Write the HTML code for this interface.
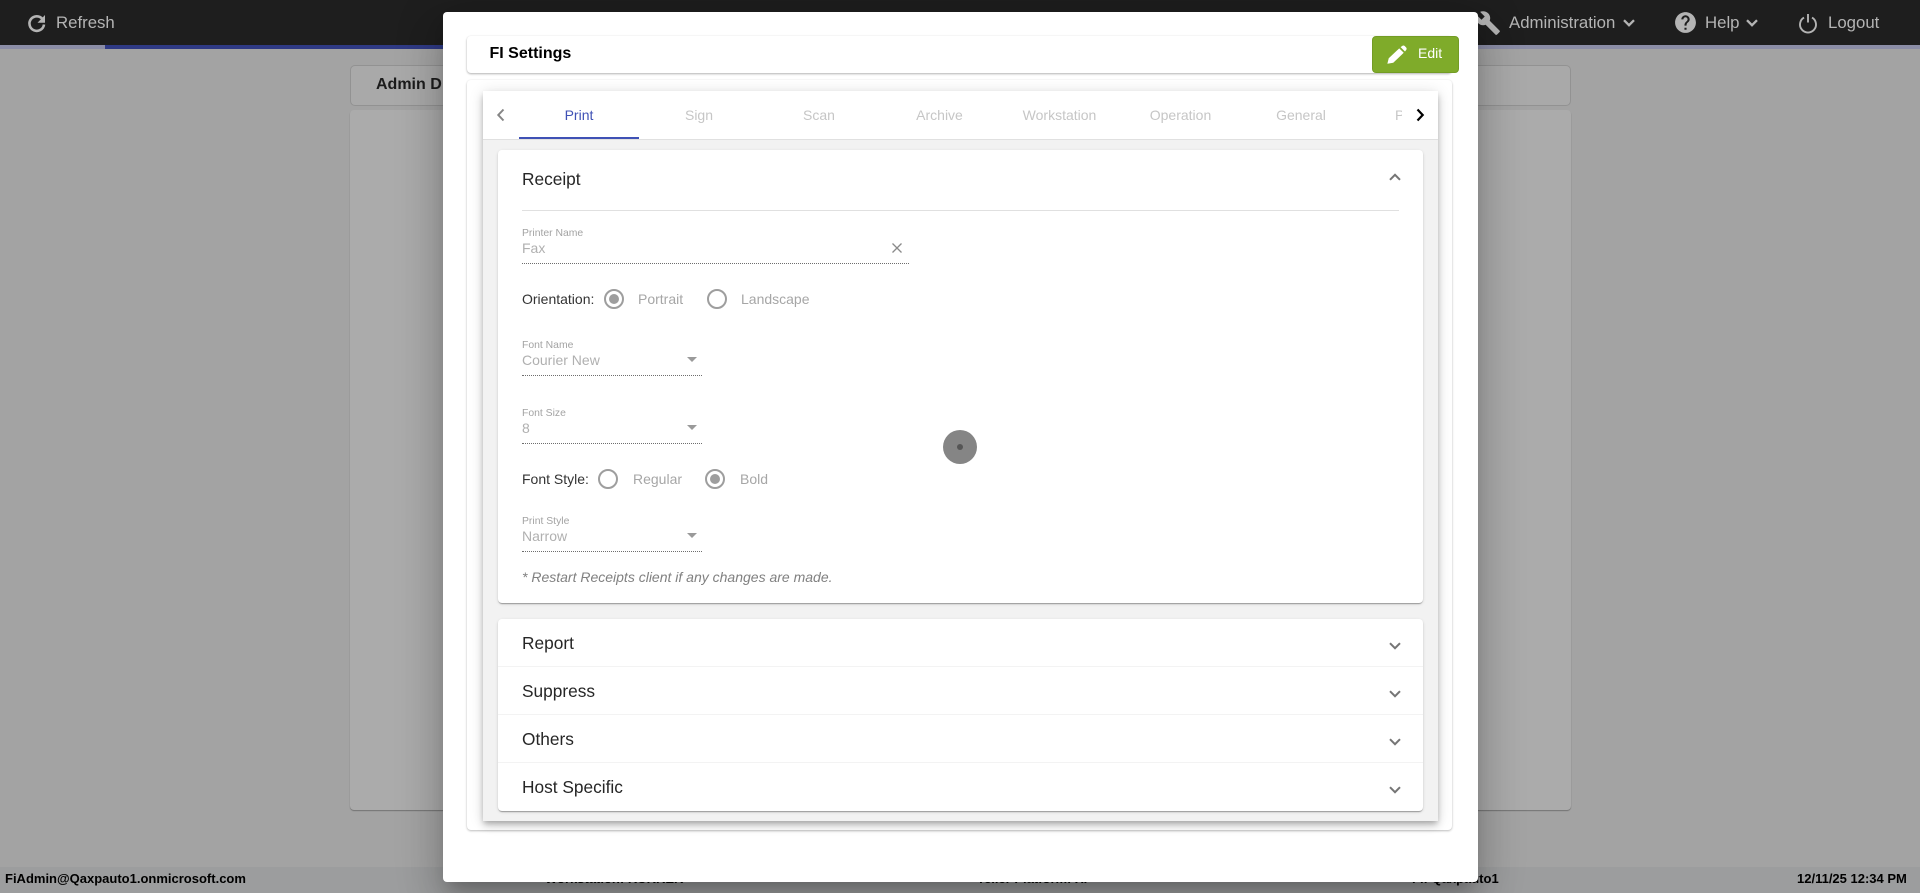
<!DOCTYPE html>
<html lang="en"><head><meta charset="utf-8"><title>FI Settings</title>
<style>
html,body{margin:0;padding:0;width:1920px;height:893px;overflow:hidden;background:#a3a3a3;font-family:"Liberation Sans",Arial,sans-serif}
.a{position:absolute}
.t{position:absolute;white-space:nowrap;line-height:20px;height:20px}
.nav{color:#b4b4b4;font-size:16.8px}
.foot{font-size:13px;font-weight:bold;color:#000}
.tab{position:absolute;top:105px;width:120px;text-align:center;font-size:14px;line-height:20px;color:#c6c6c6}
.lab{font-size:10.4px;color:#a3a3a3}
.val{font-size:14px;color:#b0b0b0}
.blk{font-size:14px;color:#333}
.opt{font-size:14px;color:#a6a6a6}
.dot{position:absolute;border-bottom:1px dotted #6e6e6e;height:0}
.head{font-size:17.3px;color:#262626}
svg{position:absolute;overflow:visible}
.divr{position:absolute;left:0;right:0;height:1px;background:#f3f3f3}
</style></head>
<body>
<!-- top bar -->
<div class="a" style="left:0;top:0;width:1920px;height:45px;background:#1e1e1e"></div>
<div class="a" style="left:0;top:45px;width:1920px;height:4px;background:#8b8da6"></div>
<div class="a" style="left:105px;top:45px;width:400px;height:4px;background:#2f3a85"></div>
<svg style="left:27px;top:12.500px" width="20" height="20" viewBox="0 0 20 20"><path d="M15.600 6.200A7.300 7.300 0 1 0 17 11.500" fill="none" stroke="#b4b4b4" stroke-width="2.600"/><path d="M18 2V9.800H10.500z" fill="#b4b4b4"/></svg>
<div class="t nav" style="left:56px;top:13px">Refresh</div>
<svg style="left:1475px;top:10px" width="26" height="26" viewBox="0 0 24 24"><path fill="#b4b4b4" d="M22.700 19l-9.100-9.100c.9-2.300.4-5-1.500-6.900-2-2-5-2.400-7.400-1.300L9 6 6 9 1.600 4.700C.4 7.100.9 10.100 2.900 12.100c1.900 1.900 4.600 2.400 6.900 1.500l9.100 9.100c.4.4 1 .4 1.400 0l2.300-2.300c.5-.4.5-1.100.1-1.400z"/></svg>
<div class="t nav" style="left:1509px;top:12.500px">Administration</div>
<svg style="left:1623px;top:18.500px" width="12" height="8" viewBox="0 0 12 8"><path d="M1 1.200l5 5 5-5" fill="none" stroke="#b4b4b4" stroke-width="2.300"/></svg>
<svg style="left:1672.500px;top:9.800px" width="25" height="25" viewBox="0 0 24 24"><path fill="#b4b4b4" d="M12 2C6.480 2 2 6.480 2 12s4.480 10 10 10 10-4.480 10-10S17.520 2 12 2zm1 17h-2v-2h2v2zm2.070-7.750l-.9.92C13.450 12.900 13 13.500 13 15h-2v-.5c0-1.100.45-2.100 1.170-2.830l1.240-1.260c.37-.36.59-.86.59-1.410 0-1.100-.9-2-2-2s-2 .9-2 2H8c0-2.210 1.790-4 4-4s4 1.790 4 4c0 .88-.36 1.680-.93 2.250z"/></svg>
<div class="t nav" style="left:1705px;top:12.500px">Help</div>
<svg style="left:1746px;top:18.500px" width="12" height="8" viewBox="0 0 12 8"><path d="M1 1.200l5 5 5-5" fill="none" stroke="#b4b4b4" stroke-width="2.300"/></svg>
<svg style="left:1799px;top:12.500px" width="18" height="20" viewBox="0 0 18 20"><path d="M5 4.600A8 8 0 1 0 13 4.600" fill="none" stroke="#b4b4b4" stroke-width="1.900"/><path d="M9 1v8.500" stroke="#b4b4b4" stroke-width="1.900"/></svg>
<div class="t nav" style="left:1828px;top:12.500px">Logout</div>

<!-- background -->
<div class="a" style="left:350px;top:65px;width:1219px;height:39px;border:1px solid #929292;border-radius:5px;background:#a9a9a9"></div>
<div class="a" style="left:376px;top:75px;width:66px;height:20px;overflow:hidden"><span class="t" style="left:0;top:0;font-size:16px;font-weight:bold;color:#1c1c1c">Admin Dashboard</span></div>
<div class="a" style="left:350px;top:110px;width:1221px;height:700px;background:#ababab;border-radius:4px;box-shadow:0 1px 1px rgba(0,0,0,.3)"></div>

<!-- footer -->
<div class="a" style="left:0;top:867px;width:1920px;height:26px;background:#9c9d9e"></div>
<div class="t foot" style="left:5px;top:869px">FiAdmin@Qaxpauto1.onmicrosoft.com</div>
<div class="t foot" style="left:545px;top:869px">Workstation: KUKREK</div>
<div class="t foot" style="left:977px;top:869px">Teller Platform: XP</div>
<div class="t foot" style="left:1412px;top:869px">FI: Qaxpauto1</div>
<div class="t foot" style="left:1797px;top:869px">12/11/25 12:34 PM</div>

<!-- modal -->
<div class="a" style="left:443px;top:12px;width:1035px;height:870px;background:#fff;border-radius:4px;box-shadow:0 11px 15px -7px rgba(0,0,0,.2),0 24px 38px 3px rgba(0,0,0,.14),0 9px 46px 8px rgba(0,0,0,.12)"></div>

<!-- header card -->
<div class="a" style="left:467px;top:36px;width:985px;height:37px;background:#fff;border-radius:4px;box-shadow:0 1px 2px rgba(0,0,0,.3),0 0 2px rgba(0,0,0,.04)"></div>
<div class="t" style="left:489.500px;top:44px;font-size:16px;font-weight:bold;color:#000">FI Settings</div>
<div class="a" style="left:1372px;top:36px;width:85px;height:35px;background:#7fab2a;border:1px solid #739c25;border-radius:4px"></div>
<svg style="left:1386px;top:45px" width="21" height="20" viewBox="0 0 20 19"><path fill="#fff" d="M1.300 17.800L2.600 12.600L12.600 3.200L16.900 7.400L6.900 16.900ZM13.900 2L15.400 .9C16.100 .3 17.100 .3 17.800 .9L19.200 2.300C19.800 3 19.800 4 19.200 4.700L18.100 6.200Z"/></svg>
<div class="t" style="left:1418px;top:43px;font-size:14px;color:#fff">Edit</div>

<!-- outer card -->
<div class="a" style="left:467px;top:80px;width:985px;height:750px;background:#fff;border-radius:4px;box-shadow:0 1px 2px rgba(0,0,0,.25),0 0 2px rgba(0,0,0,.04)"></div>

<!-- tab panel -->
<div class="a" style="left:483px;top:91px;width:955px;height:730px;background:#f2f2f2;box-shadow:0 3px 5px -1px rgba(0,0,0,.2),0 5px 8px rgba(0,0,0,.14),0 1px 14px rgba(0,0,0,.12)"></div>
<div class="a" style="left:483px;top:91px;width:955px;height:48px;background:#fff;border-bottom:1px solid #e0e0e0"></div>
<div class="a" style="left:519px;top:137px;width:120px;height:2px;background:#3f51b5"></div>
<svg style="left:496px;top:108px" width="10" height="14" viewBox="0 0 10 14"><path d="M7.500 1.500L2.300 7l5.200 5.500" fill="none" stroke="#858585" stroke-width="2"/></svg>
<svg style="left:1415px;top:108px" width="10" height="14" viewBox="0 0 10 14"><path d="M2.500 1.500L7.700 7l-5.200 5.500" fill="none" stroke="#000" stroke-width="2.200"/></svg>
<div class="tab" style="left:519px;color:#3f51b5">Print</div>
<div class="tab" style="left:639px">Sign</div>
<div class="tab" style="left:759px">Scan</div>
<div class="tab" style="left:879.500px">Archive</div>
<div class="tab" style="left:999.500px">Workstation</div>
<div class="tab" style="left:1120.500px">Operation</div>
<div class="tab" style="left:1241px">General</div>
<div class="a" style="left:1395px;top:105px;width:7px;height:20px;overflow:hidden"><span class="t" style="left:0;top:0;font-size:14px;color:#c6c6c6">Printer</span></div>

<!-- receipt card -->
<div class="a" style="left:498px;top:150px;width:925px;height:453px;background:#fff;border-radius:4px;box-shadow:0 2px 1px -1px rgba(0,0,0,.2),0 1px 1px rgba(0,0,0,.14),0 1px 3px rgba(0,0,0,.12)"></div>
<div class="t head" style="left:522px;top:169px">Receipt</div>
<svg style="left:1389px;top:173px" width="12" height="8" viewBox="0 0 12 8"><path d="M1 6.800l5-5 5 5" fill="none" stroke="#757575" stroke-width="2"/></svg>
<div class="a" style="left:522px;top:210px;width:877px;height:1px;background:#e0e0e0"></div>

<div class="t lab" style="left:522px;top:224px">Printer Name</div>
<div class="t val" style="left:522px;top:238px">Fax</div>
<svg style="left:892px;top:243px" width="10" height="10" viewBox="0 0 10 10"><path d="M.5.500l9 9M9.500.500l-9 9" stroke="#8a8a8a" stroke-width="1.300"/></svg>
<div class="dot" style="left:522px;top:263px;width:387px"></div>

<div class="t blk" style="left:522px;top:289px">Orientation:</div>
<svg style="left:604px;top:289px" width="20" height="20"><circle cx="10" cy="10" r="9" fill="none" stroke="#9e9e9e" stroke-width="2"/><circle cx="10" cy="10" r="5" fill="#9e9e9e"/></svg>
<div class="t opt" style="left:638px;top:289px">Portrait</div>
<svg style="left:707px;top:289px" width="20" height="20"><circle cx="10" cy="10" r="9" fill="none" stroke="#9e9e9e" stroke-width="2"/></svg>
<div class="t opt" style="left:741px;top:289px">Landscape</div>

<div class="t lab" style="left:522px;top:336px">Font Name</div>
<div class="t val" style="left:522px;top:350px">Courier New</div>
<svg style="left:687px;top:357px" width="10" height="5"><path d="M0 0h10L5 5z" fill="#9a9a9a"/></svg>
<div class="dot" style="left:522px;top:375px;width:180px"></div>

<div class="t lab" style="left:522px;top:404px">Font Size</div>
<div class="t val" style="left:522px;top:418px">8</div>
<svg style="left:687px;top:425px" width="10" height="5"><path d="M0 0h10L5 5z" fill="#9a9a9a"/></svg>
<div class="dot" style="left:522px;top:443px;width:180px"></div>

<div class="t blk" style="left:522px;top:469px">Font Style:</div>
<svg style="left:598px;top:469px" width="20" height="20"><circle cx="10" cy="10" r="9" fill="none" stroke="#9e9e9e" stroke-width="2"/></svg>
<div class="t opt" style="left:633px;top:469px">Regular</div>
<svg style="left:705px;top:469px" width="20" height="20"><circle cx="10" cy="10" r="9" fill="none" stroke="#9e9e9e" stroke-width="2"/><circle cx="10" cy="10" r="5" fill="#9e9e9e"/></svg>
<div class="t opt" style="left:740px;top:469px">Bold</div>

<div class="t lab" style="left:522px;top:512px">Print Style</div>
<div class="t val" style="left:522px;top:526px">Narrow</div>
<svg style="left:687px;top:533px" width="10" height="5"><path d="M0 0h10L5 5z" fill="#9a9a9a"/></svg>
<div class="dot" style="left:522px;top:551px;width:180px"></div>
<div class="t" style="left:522px;top:567px;font-size:14px;font-style:italic;color:#808080">* Restart Receipts client if any changes are made.</div>

<!-- accordion -->
<div class="a" style="left:498px;top:619px;width:925px;height:192px;background:#fff;border-radius:4px;box-shadow:0 2px 1px -1px rgba(0,0,0,.2),0 1px 1px rgba(0,0,0,.14),0 1px 3px rgba(0,0,0,.12)">
<div class="divr" style="top:47px"></div><div class="divr" style="top:95px"></div><div class="divr" style="top:143px"></div>
</div>
<div class="t head" style="left:522px;top:633px">Report</div>
<div class="t head" style="left:522px;top:681px">Suppress</div>
<div class="t head" style="left:522px;top:729px">Others</div>
<div class="t head" style="left:522px;top:777px">Host Specific</div>
<svg style="left:1389px;top:642px" width="12" height="8" viewBox="0 0 12 8"><path d="M1 1.200l5 5 5-5" fill="none" stroke="#757575" stroke-width="2"/></svg>
<svg style="left:1389px;top:690px" width="12" height="8" viewBox="0 0 12 8"><path d="M1 1.200l5 5 5-5" fill="none" stroke="#757575" stroke-width="2"/></svg>
<svg style="left:1389px;top:738px" width="12" height="8" viewBox="0 0 12 8"><path d="M1 1.200l5 5 5-5" fill="none" stroke="#757575" stroke-width="2"/></svg>
<svg style="left:1389px;top:786px" width="12" height="8" viewBox="0 0 12 8"><path d="M1 1.200l5 5 5-5" fill="none" stroke="#757575" stroke-width="2"/></svg>

<!-- spinner -->
<div class="a" style="left:943px;top:430px;width:34px;height:34px;border-radius:50%;background:#858585"></div>
<div class="a" style="left:957px;top:444px;width:6px;height:6px;border-radius:50%;background:#555"></div>
</body></html>
